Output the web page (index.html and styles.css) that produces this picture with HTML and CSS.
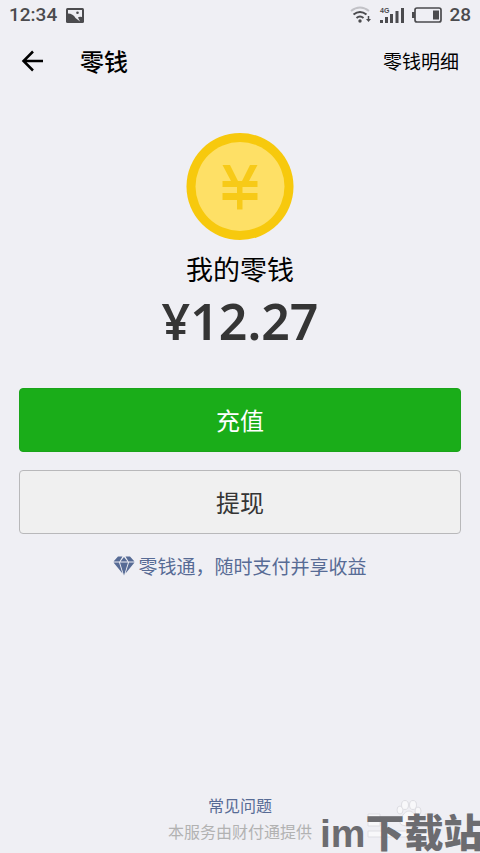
FILE: index.html
```html
<!DOCTYPE html>
<html lang="zh-CN">
<head>
<meta charset="utf-8">
<meta name="viewport" content="width=device-width, initial-scale=1">
<title>零钱</title>
<link rel="stylesheet" href="styles.css">
</head>
<body>
<div class="status">
  <span>12:34</span>
  <svg width="18" height="15" viewBox="0 0 18 15" aria-hidden="true"><rect width="18" height="15" rx="1.500" fill="#4b4b4e"/><path d="M2 2h14v7q-3-.5-4 .5l2 4-4.500-3.500Q7 5.500 2 5.500z" fill="#efeff4"/><circle cx="11.500" cy="4.800" r="1.300" fill="#4b4b4e"/></svg>
  <div class="status-right">
    <svg width="22" height="18" viewBox="0 0 22 18" fill="none" stroke-width="2" aria-hidden="true"><path d="M1 5q9-7 18 0" stroke="#c2c2c7"/><path d="M3.500 8.500q6.500-5 13 0M6.500 12q3.500-3 7 0" stroke="#4b4b4e"/><circle cx="10" cy="15" r="1.700" fill="#4b4b4e"/><path d="M18.500 10v4" stroke="#4b4b4e" stroke-width="1.500"/><path d="M16 13h5l-2.500 3z" fill="#4b4b4e"/></svg>
    <svg width="26" height="18" viewBox="0 0 26 18" fill="#4b4b4e" aria-hidden="true"><path d="M1 14h3v3H1zM6 11h3v6H6zM11 8h3v9h-3zM16.500 5h3v12h-3zM22 2h3v15h-3z"/><text class="network" x="1" y="7">4G</text></svg>
    <svg width="30" height="16" viewBox="0 0 30 16" aria-hidden="true"><rect x="3" y="1" width="26" height="14" rx="2" fill="none" stroke="#4b4b4e" stroke-width="1.700"/><path d="M0 5h3v6H0zM21 3.500h6v9h-6z" fill="#4b4b4e"/></svg>
    <span>28</span>
  </div>
</div>
<header class="header">
  <button class="back" type="button" aria-label="返回"><svg width="23" height="22" viewBox="0 0 23 22" fill="none" stroke="#000" stroke-width="2.500" aria-hidden="true"><path d="M22 11H2.500M12 1.500L2.500 11l9.500 9.500"/></svg></button>
  <h1 class="title">零钱</h1>
  <a class="detail" href="#">零钱明细</a>
</header>
<main class="main">
  <svg width="108" height="108" viewBox="0 0 108 108" aria-hidden="true"><circle cx="54" cy="53.500" r="53.500" fill="#f7c90d"/><circle cx="54" cy="53.500" r="44.500" fill="#fee066"/><path d="M36.500 32h7.500l8 16h4l8-16h7.500L63 48h8.500v6h-15v6h15v7h-15v9.500H51V67H36.500v-7H51v-6H36.500v-6H45z" fill="#f7ca18"/></svg>
  <h2 class="label">我的零钱</h2>
  <p class="amount">¥12.27</p>
  <button class="btn btn-primary" type="button">充值</button>
  <button class="btn btn-plain" type="button">提现</button>
  <a class="promo" href="#"><svg width="22" height="20" viewBox="0 0 22 20" fill="#576b95" aria-hidden="true"><path d="M5 .5h4.500L6.500 5.500H.5zM12.500 .5H17l4.500 5h-6zM11 1l3.500 4.500h-7zM.5 6.500h5.500L9.500 17.500zM7 6.500h8l-4 13zM16 6.500h5.500l-9 11z"/></svg><span>零钱通，随时支付并享收益</span></a>
</main>
<footer class="footer">
  <a class="faq" href="#">常见问题</a>
  <p class="provider">本服务由财付通提供</p>
</footer>
<div class="watermark">
  <svg class="paw" width="70" height="42" viewBox="0 0 70 42" fill="#f8f8fa" stroke="#dedee3" aria-hidden="true"><path d="M1 15h12v12H1zM58 15h11v12H58zM1 32h68v6H1z"/><ellipse cx="33" cy="11" rx="3" ry="4"/><ellipse cx="38" cy="6" rx="3.500" ry="4.500"/><ellipse cx="46" cy="6" rx="3.500" ry="4.500"/><ellipse cx="51" cy="12" rx="3" ry="4"/><path d="M42 12c5 0 9 8 9 12s-18 4-18 0 4-12 9-12z"/></svg>
  <span class="mark">im下载站</span>
</div>
</body>
</html>
```
FILE: styles.css
```css
* { box-sizing: border-box; }
body {
  margin: 0;
  min-height: 100vh;
  display: flex;
  flex-direction: column;
  position: relative;
  overflow-x: hidden;
  background: #efeff4;
  color: #000;
  font-family: "Noto Sans CJK SC", sans-serif;
}
h1, h2, p { margin: 0; font-weight: 400; }
a { text-decoration: none; }
button { font-family: inherit; cursor: pointer; }
svg { display: block; flex: none; }
.status {
  display: flex;
  align-items: center;
  height: 30px;
  padding: 0 9px;
  gap: 9px;
  color: #4b4b4e;
  font: 500 19px/30px Roboto, sans-serif;
}
.status-right { display: flex; align-items: center; gap: 7px; margin-left: auto; }
.network { font: 700 7px "Liberation Sans", sans-serif; }
.header {
  display: flex;
  align-items: center;
  height: 62px;
  padding: 0 21px;
}
.back { padding: 0; border: 0; background: none; }
.title { margin-left: 36px; font-size: 24px; line-height: 36px; font-weight: 500; }
.detail { margin-left: auto; color: #000; font-size: 19px; line-height: 28px; }
.main {
  flex: 1;
  display: flex;
  flex-direction: column;
  align-items: center;
  padding: 41px 19px 0;
}
.label { margin-top: 8px; font-size: 27px; line-height: 40px; }
.amount { color: #353535; font: 600 50px/64px "Noto Sans", sans-serif; }
.btn {
  width: 100%;
  height: 64px;
  padding: 0;
  border-radius: 4px;
  font-size: 24px;
  line-height: 36px;
}
.btn-primary { margin-top: 35px; border: 1px solid #1aa41a; background: #1aad19; color: #fff; }
.btn-plain { margin-top: 18px; border: 1px solid #b8b8ba; background: #f0f0f0; color: #353535; }
.promo {
  display: flex;
  align-items: center;
  gap: 3px;
  margin-top: 18px;
  color: #576b95;
  font-size: 19px;
  line-height: 28px;
}
.footer { padding-bottom: 9px; text-align: center; font-size: 16px; line-height: 26px; }
.faq { color: #576b95; }
.provider { color: #b2b2b2; }
.watermark {
  position: absolute;
  right: 0;
  bottom: 0;
  width: 160px;
  height: 54px;
  overflow: hidden;
  pointer-events: none;
}
.paw { position: absolute; left: 47px; top: 0; }
.mark {
  position: absolute;
  left: 0;
  bottom: -11px;
  color: #6c6c70;
  font: 900 39px/60px "Liberation Sans", "Noto Sans CJK SC", sans-serif;
  white-space: nowrap;
}
```
